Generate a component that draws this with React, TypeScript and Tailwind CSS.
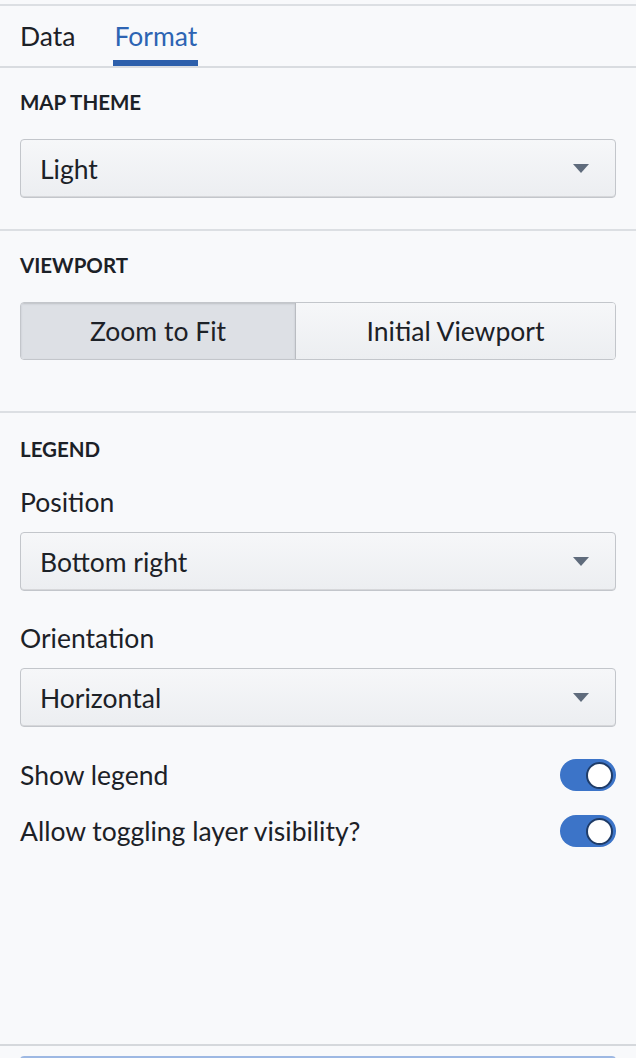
import React from "react"

const font = { fontFamily: "Lato, 'Noto Sans', sans-serif" }

const Caret = () => (
  <svg width="16" height="9" viewBox="0 0 16 9" className="shrink-0">
    <path d="M0 0 H16 L8 9 Z" fill="#5f6b7c" />
  </svg>
)

const Select = ({ value }: { value: string }) => (
  <div className="h-[59px] rounded-[4px] border border-[#c3c6cb] bg-gradient-to-b from-[#f6f7f9] to-[#eceef1] shadow-[inset_0_-1px_0_rgba(17,20,24,0.1)] flex items-center justify-between pl-[19px] pr-[26px]">
    <span className="text-[26.5px] leading-[34px] text-[#1c2127]">{value}</span>
    <Caret />
  </div>
)

const Header = ({ children }: { children: React.ReactNode }) => (
  <div className="text-[20.5px] leading-[28px] font-bold text-[#1c2127]">{children}</div>
)

const Toggle = () => (
  <div className="w-[56px] h-[32px] rounded-full bg-[#3c74c8] flex items-center justify-end pr-[3px]">
    <div className="w-[27px] h-[27px] rounded-full bg-white border-2 border-[#1f3c68]" />
  </div>
)

export default function App() {
  return (
    <div style={font} className="w-[636px] h-[1058px] bg-[#f8f9fb] overflow-hidden flex flex-col">
      <div className="h-[4px] shrink-0" />
      <div className="h-[2px] bg-[#dcdfe3] shrink-0" />

      {/* tabs */}
      <div className="h-[62px] shrink-0 border-b-2 border-[#d9dce0] flex items-end gap-[38px] px-[20px] text-[26.5px] leading-[34px]">
        <div className="h-[60px] pt-[13px] text-[#1c2127]">Data</div>
        <div className="h-[60px] pt-[13px] text-[#2d64b3] border-b-[6px] border-[#2d5fab] px-[1px]">Format</div>
      </div>

      {/* map theme */}
      <div className="px-[20px] pt-[20px] pb-[31px] border-b-2 border-[#dcdfe3] shrink-0">
        <Header>MAP THEME</Header>
        <div className="mt-[23px]">
          <Select value="Light" />
        </div>
      </div>

      {/* viewport */}
      <div className="px-[20px] pt-[20px] pb-[51px] border-b-2 border-[#dcdfe3] shrink-0">
        <Header>VIEWPORT</Header>
        <div className="mt-[23px] h-[58px] rounded-[4px] border border-[#c3c6cb] flex overflow-hidden text-[26.5px] leading-[34px] text-[#1c2127]">
          <div className="w-[275px] bg-[#dde0e5] border-r border-[#b9bcc1] shadow-[inset_0_1px_2px_rgba(17,20,24,0.15)] flex items-center justify-center">
            Zoom to Fit
          </div>
          <div className="flex-1 bg-gradient-to-b from-[#f6f7f9] to-[#eceef1] flex items-center justify-center">
            Initial Viewport
          </div>
        </div>
      </div>

      {/* legend */}
      <div className="px-[20px] pt-[22px] flex-1">
        <Header>LEGEND</Header>
        <div className="mt-[22px] text-[26.5px] leading-[34px] text-[#1c2127]">Position</div>
        <div className="mt-[13px]">
          <Select value="Bottom right" />
        </div>
        <div className="mt-[30px] text-[26.5px] leading-[34px] text-[#1c2127]">Orientation</div>
        <div className="mt-[13px]">
          <Select value="Horizontal" />
        </div>
        <div className="mt-[31px] flex items-center justify-between text-[26.5px] leading-[34px] text-[#1c2127]">
          <span>Show legend</span>
          <Toggle />
        </div>
        <div className="mt-[22px] flex items-center justify-between text-[26.5px] leading-[34px] text-[#1c2127]">
          <span>Allow toggling layer visibility?</span>
          <Toggle />
        </div>
      </div>

      {/* footer */}
      <div className="h-[14px] shrink-0 border-t-2 border-[#d5d8dc] px-[20px] pt-[10px]">
        <div className="h-[20px] rounded-t-[4px] border-t-2 border-[#9db8e3] bg-[#dfe8f6]" />
      </div>
    </div>
  )
}
